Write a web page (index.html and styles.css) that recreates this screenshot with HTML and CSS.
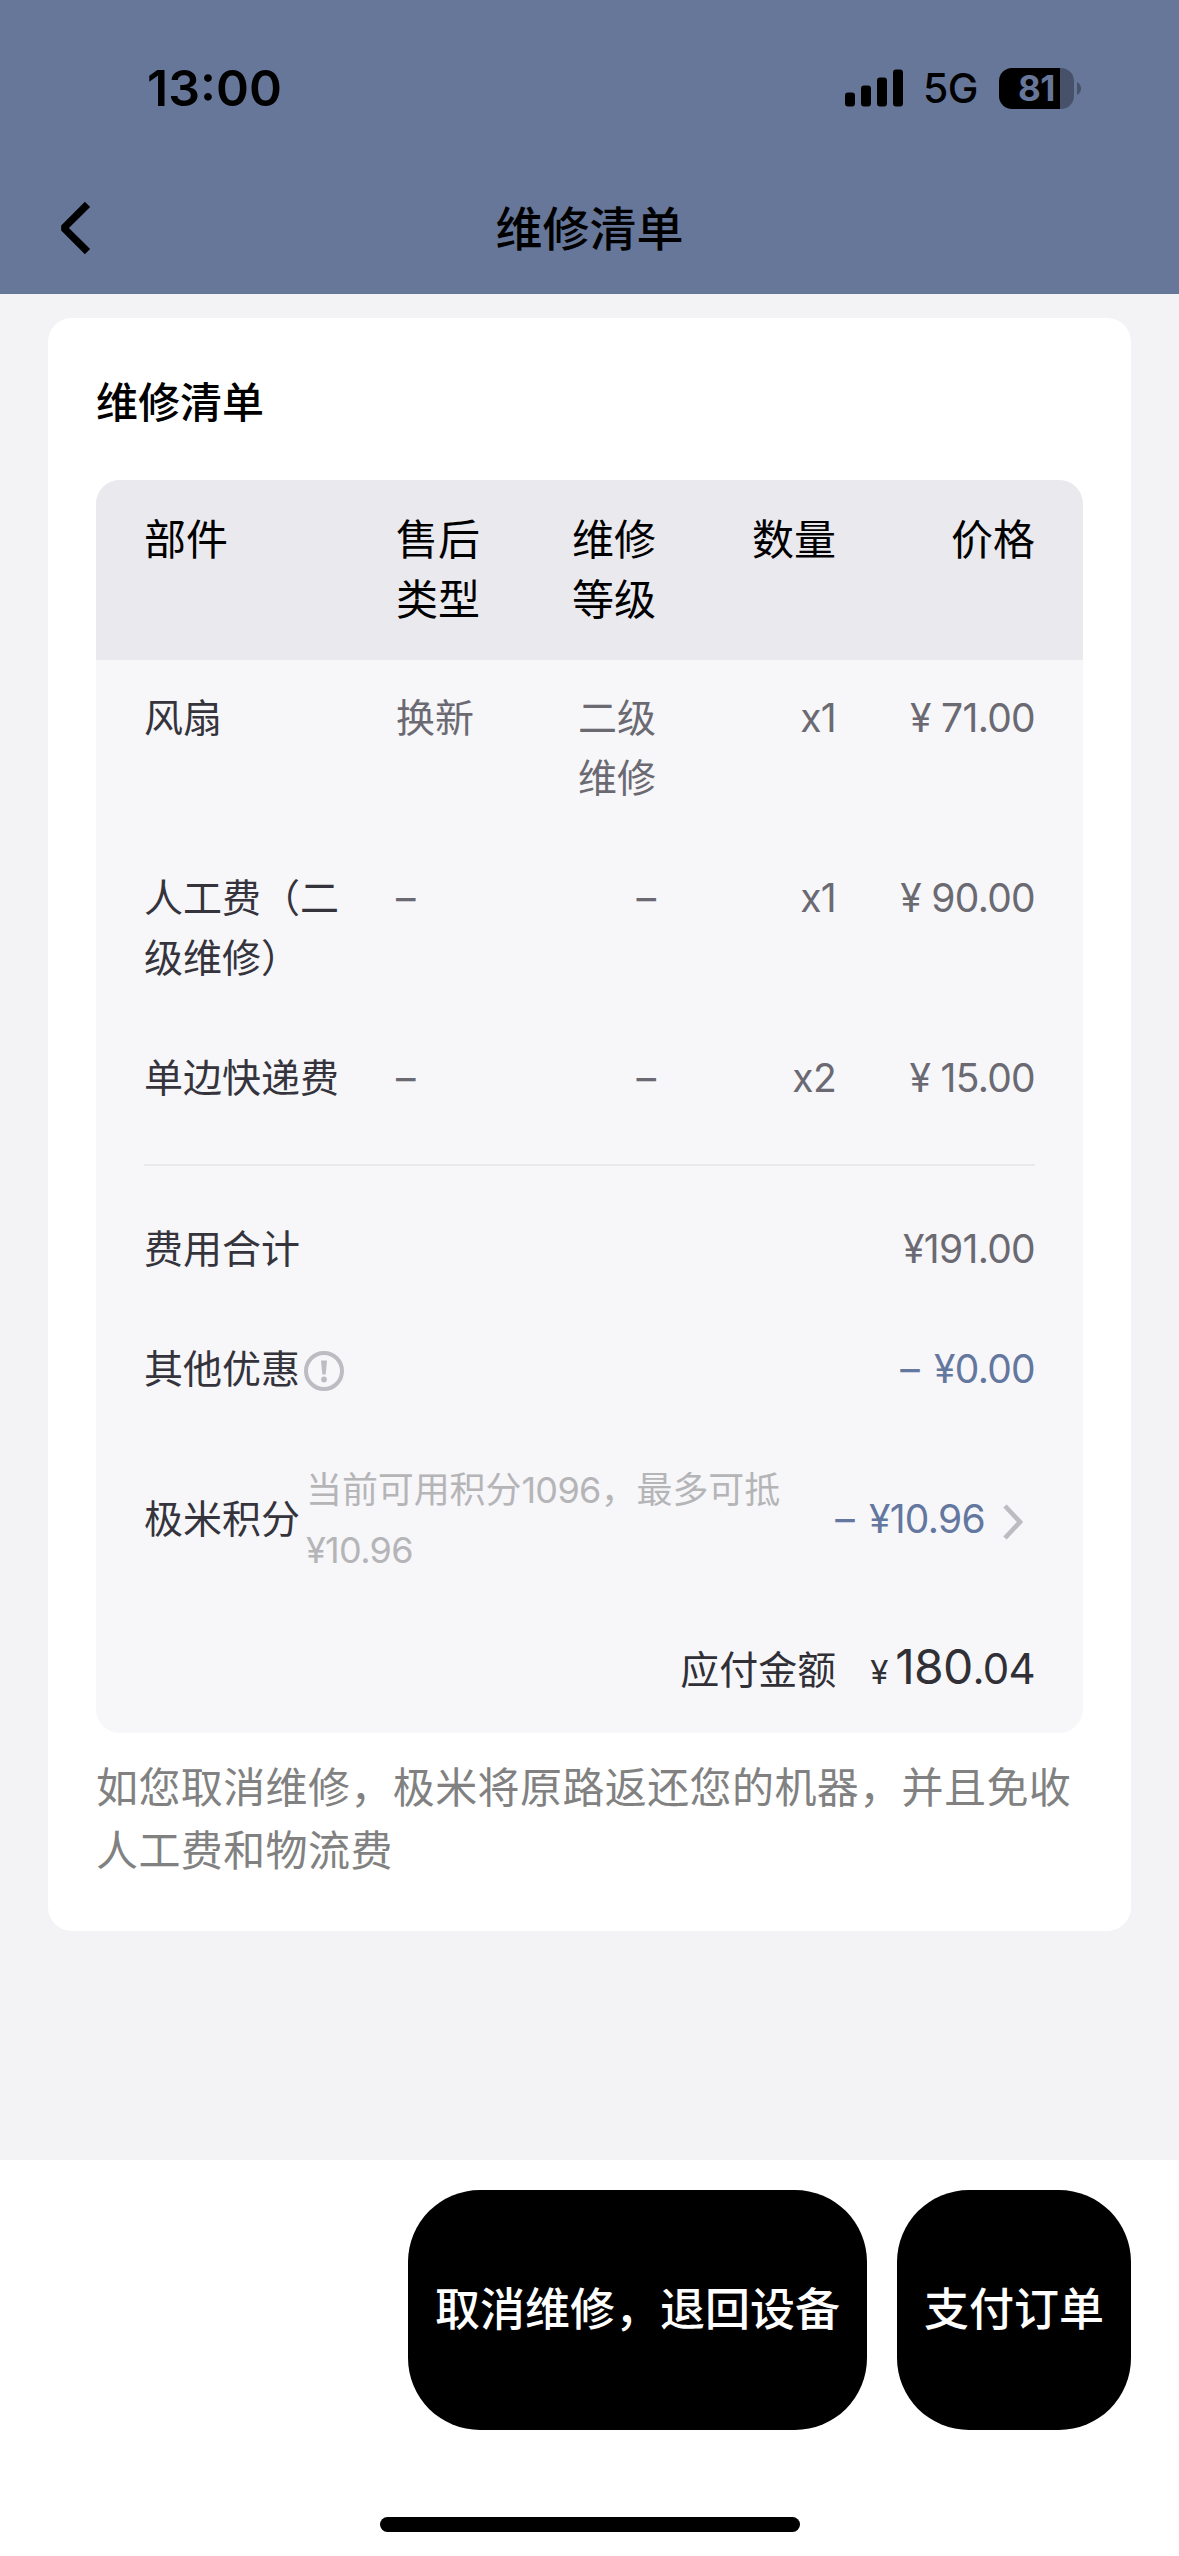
FILE: index.html
```html
<!DOCTYPE html>
<html lang="zh-CN">
<head>
<meta charset="utf-8">
<title>维修清单</title>
<link rel="stylesheet" href="styles.css">
</head>
<body>
<div class="screen">
  <header class="header">
    <div class="status">
      <span class="clock">13:00</span>
      <div class="indicators">
        <svg class="signal" width="58" height="38" viewBox="0 0 58 38"><rect x="0" y="23.500" width="10" height="14" rx="3"/><rect x="16" y="16.500" width="10" height="21" rx="3"/><rect x="32" y="8.500" width="10" height="29" rx="3"/><rect x="48" y="0.500" width="10" height="37" rx="3"/></svg>
        <span class="network">5G</span>
        <div class="battery"><span class="level">81</span></div>
        <svg class="cap" width="4" height="13" viewBox="0 0 4 13"><path d="M0 0Q4 2.500 4 6.500T0 13Z"/></svg>
      </div>
    </div>
    <div class="navbar">
      <svg class="back" width="34" height="54" viewBox="0 0 34 54"><path d="M29.500 3.300L5.800 27L29.500 50.700"/></svg>
      <h1 class="nav-title">维修清单</h1>
    </div>
  </header>
  <main class="content">
    <section class="card">
      <h2 class="card-title">维修清单</h2>
      <div class="table">
        <div class="row head">
          <span>部件</span><span>售后类型</span><span>维修等级</span><span>数量</span><span>价格</span>
        </div>
        <div class="row">
          <span class="name">风扇</span><span>换新</span><span>二级维修</span><span class="num">x1</span><span class="num">¥ 71.00</span>
        </div>
        <div class="row">
          <span class="name">人工费（二级维修）</span><span>–</span><span>–</span><span class="num">x1</span><span class="num">¥ 90.00</span>
        </div>
        <div class="row">
          <span class="name">单边快递费</span><span>–</span><span>–</span><span class="num">x2</span><span class="num">¥ 15.00</span>
        </div>
        <div class="summary">
          <div class="line"><span class="name">费用合计</span><span class="amount num">¥191.00</span></div>
          <div class="line"><span class="name">其他优惠</span>
            <svg class="info" width="40" height="40" viewBox="0 0 40 40"><circle cx="20" cy="20" r="18"/><path d="M17 9.500h6l-1.300 14h-3.400Z"/><circle class="dot" cx="20" cy="28.500" r="2.900"/></svg>
            <span class="amount num discount"><span class="minus">–</span>¥0.00</span></div>
          <div class="line points"><span class="name">极米积分</span><span class="hint">当前可用积分<span class="num">1096</span>，最多可抵<span class="num">¥10.96</span></span><span class="amount num discount"><span class="minus">–</span>¥10.96</span>
            <svg class="chevron" width="20" height="36" viewBox="0 0 20 36"><path d="M2 2L17 18L2 34"/></svg></div>
          <div class="total"><span class="total-label">应付金额</span><span class="yen">¥</span><span class="whole">180</span><span class="cents">.04</span></div>
        </div>
      </div>
      <p class="note">如您取消维修，极米将原路返还您的机器，并且免收人工费和物流费</p>
    </section>
  </main>
  <footer class="footer">
    <div class="actions"><button class="btn">取消维修，退回设备</button><button class="btn">支付订单</button></div>
    <div class="home"></div>
  </footer>
</div>
</body>
</html>
```
FILE: styles.css
```css
* { box-sizing: border-box; }
body {
  margin: 0;
  font-family: Inter, "Noto Sans CJK SC", sans-serif;
  font-size: 39px;
  line-height: 60px;
  color: #6b6a72;
}
h1, h2, p { margin: 0; }
svg { display: block; flex: none; }
.screen { width: 1179px; height: 2556px; display: flex; flex-direction: column; background: #f3f3f6; }

.header { height: 294px; background: #677799; color: #000; }
.status { height: 162px; padding: 14px 98px 0 147px; display: flex; align-items: center; justify-content: space-between; }
.clock { font-size: 50px; font-weight: 600; }
.indicators { display: flex; align-items: center; }
.network { margin-left: 20px; font-size: 41px; font-weight: 500; letter-spacing: -.5px; }
.battery { width: 75px; height: 41px; margin-left: 21px; border-radius: 13px; background: linear-gradient(to right, #000 61px, #47526a 61px); display: flex; justify-content: center; }
.level { font-size: 35px; line-height: 41px; font-weight: 700; letter-spacing: -.5px; color: #677799; }
.cap { margin-left: 3px; fill: #47526a; }
.navbar { height: 132px; padding: 0 58px; display: grid; grid-template-columns: 34px 1fr 34px; align-items: center; }
.back path { fill: none; stroke: #000; stroke-width: 7.4; stroke-linejoin: bevel; }
.nav-title { padding-top: 2px; font-size: 47px; font-weight: 500; text-align: center; }

.content { flex: 1; padding: 24px 48px; }
.card { height: 1613px; padding: 48px; border-radius: 24px; background: #fff; }
.card-title { height: 72px; padding-top: 1px; line-height: 72px; margin-bottom: 42px; font-size: 42px; font-weight: 500; color: #000; }
.table { height: 1253px; border-radius: 24px; background: #f7f7fa; overflow: hidden; }
.row { display: grid; grid-template-columns: 252px 84px 176px 180px 1fr; padding: 28px 48px 32px; }
.row > span:nth-child(1) { padding-right: 48px; }
.row > span:nth-child(3) { padding-left: 92px; }
.row > span:nth-child(n+3) { text-align: right; }
.head { padding: 30px 48px; background: #e9e9ee; font-size: 42px; color: #000; }
.name { color: #35343c; }
.num { letter-spacing: -.7px; }
.summary { margin: 24px 48px 0; padding-top: 24px; border-top: 2px solid #e9e9ec; }
.line { height: 120px; padding-bottom: 3px; display: flex; align-items: center; }
.amount { margin-left: auto; }
.discount { color: #64779f; }
.minus { margin-right: 15px; }
.info { margin: 4px 0 0 4px; fill: #bcbcc2; }
.info circle:first-child { fill: none; stroke: #bcbcc2; stroke-width: 4; }
.points { height: 180px; }
.hint { width: 480px; margin-left: 6px; padding-top: 2px; font-size: 36px; letter-spacing: -.1px; color: #b5b5b8; }
.chevron { margin: 6px 12px 0 18px; }
.chevron path { fill: none; stroke: #bcbcc2; stroke-width: 4.7; }
.total { height: 123px; display: flex; align-items: baseline; justify-content: flex-end; color: #303036; }
.total-label { margin-right: 34px; line-height: 120px; }
.yen { font-size: 33px; margin-right: 7px; }
.whole { font-size: 48px; letter-spacing: -.8px; }
.cents { font-size: 42px; letter-spacing: -.7px; }
.note { margin-top: 23px; font-size: 42px; line-height: 63px; letter-spacing: .4px; color: #818181; }

.footer { height: 396px; padding: 30px 48px 24px; background: #fff; display: flex; flex-direction: column; justify-content: space-between; }
.actions { display: flex; justify-content: flex-end; gap: 30px; }
.btn { height: 240px; padding: 0 27px; border: 0; border-radius: 72px; background: #000; color: #fff; font: 500 45px/60px Inter, "Noto Sans CJK SC", sans-serif; }
.home { width: 420px; height: 15px; align-self: center; border-radius: 8px; background: #000; }
```
